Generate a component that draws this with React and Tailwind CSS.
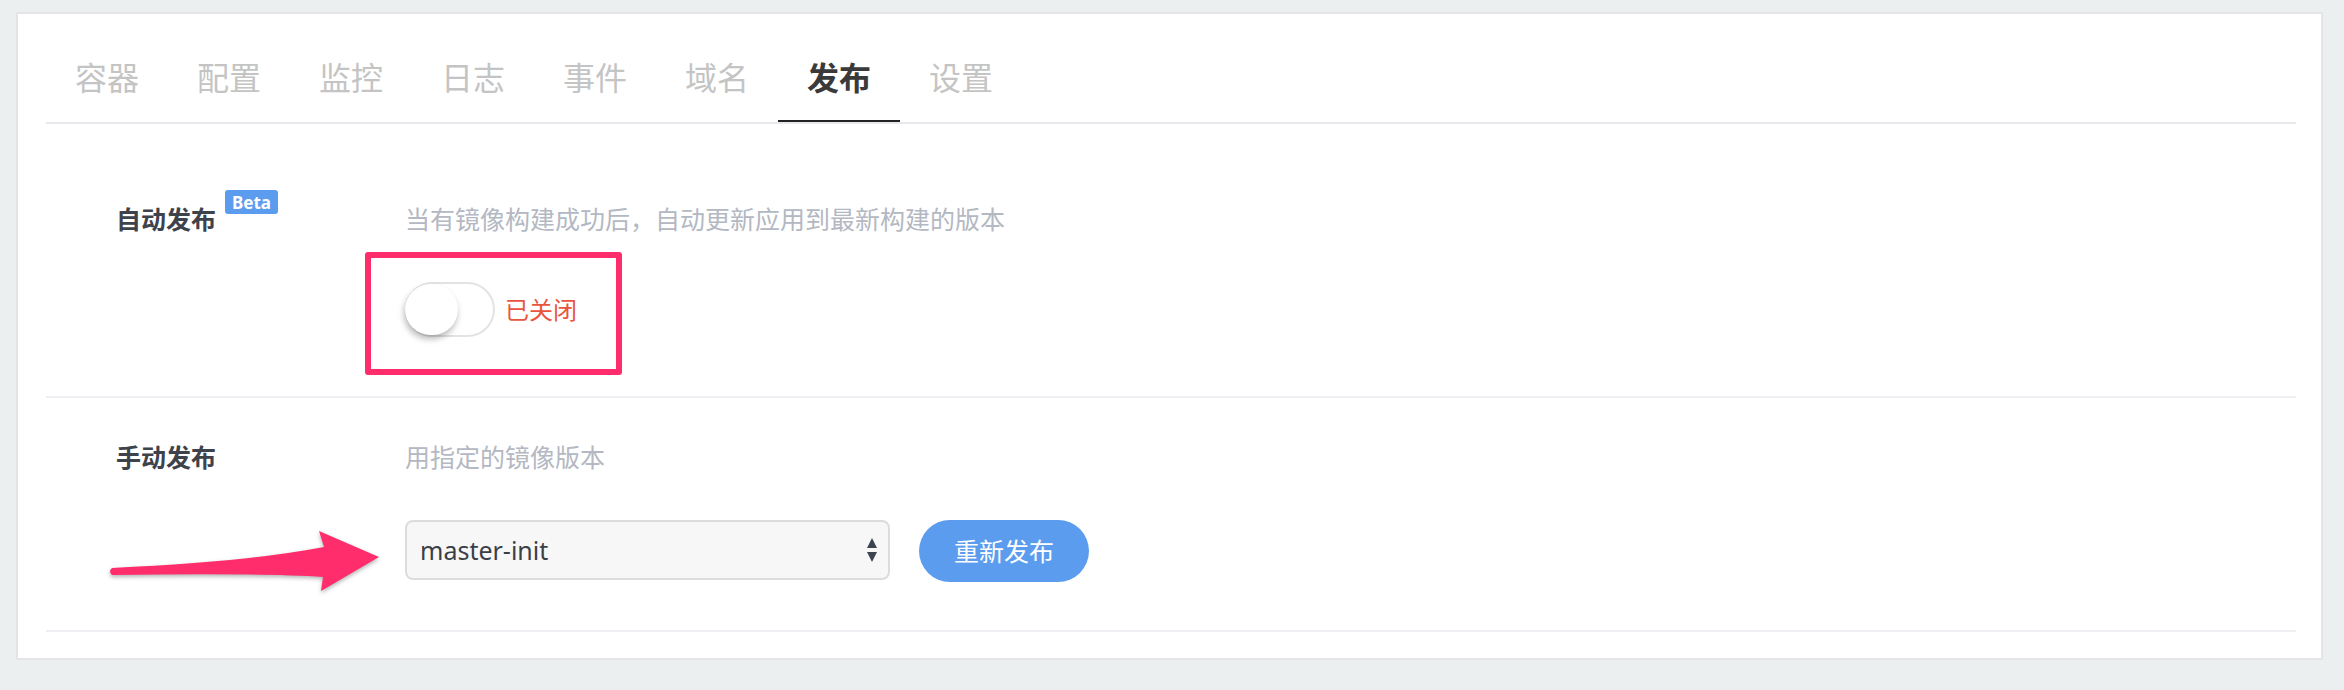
const tabs = ['容器', '配置', '监控', '日志', '事件', '域名', '发布', '设置']

const font = { fontFamily: '"Noto Sans", "Noto Sans CJK SC", sans-serif' }

function Tabs({ active }) {
  return (
    <nav className="flex border-b-2 border-[#e8e9ed]">
      {tabs.map((tab) => (
        <div
          key={tab}
          className={
            tab === active
              ? 'border-b-2 border-[#222222] px-[29px] pb-[22px] pt-[44px] text-[32px] font-bold leading-[40px] text-[#3a3a3a]'
              : 'border-b-2 border-transparent px-[29px] pb-[22px] pt-[44px] text-[32px] leading-[40px] text-[#c4c4c4]'
          }
        >
          {tab}
        </div>
      ))}
    </nav>
  )
}

function Toggle() {
  return (
    <div className="relative h-[55px] w-[90px] rounded-full border-2 border-[#e3e3e3] bg-white">
      <span className="absolute -left-[2px] top-[0px] h-[51px] w-[53px] rounded-full bg-white shadow-[-1px_4px_6px_rgba(0,0,0,0.28)]" />
    </div>
  )
}

function PinkArrow() {
  return (
    <svg
      className="absolute -left-[299px] top-[5px] h-[75px] w-[280px] drop-shadow-[0_2px_2px_rgba(0,0,0,0.3)]"
      viewBox="0 0 280 75"
    >
      <path
        d="M6 43 Q140 37 218 22 L213 6 L273 32 L215 66 L217 52 Q160 48 6 50 Q2 46.5 6 43 Z"
        fill="#ff2d6b"
      />
    </svg>
  )
}

function SelectArrows() {
  return (
    <svg className="h-[24px] w-[10px]" viewBox="0 0 10 24">
      <path d="M0 10 L5 0 L10 10 Z" fill="#3d4450" />
      <path d="M0 14 L10 14 L5 24 Z" fill="#3d4450" />
    </svg>
  )
}

export default function App() {
  return (
    <div className="min-h-screen bg-[#ebefef] pl-[16px] pr-[21px] pt-[12px]" style={font}>
      <div className="border-2 border-[#e3e5e5] bg-white pb-[26px] pl-[28px] pr-[25px]">
        <Tabs active="发布" />

        <section className="grid grid-cols-[359px_1fr] border-b-2 border-[#eeeff3] pb-[59px] pt-[77px]">
          <div className="flex items-start pl-[70px]">
            <span className="text-[25px] font-bold leading-[36px] text-[#3d424b]">自动发布</span>
            <span className="-mt-[11px] ml-[9px] flex h-[24px] items-center rounded-[3px] bg-[#5b9cee] px-[7px] text-[17px] font-bold leading-none text-white">
              Beta
            </span>
          </div>
          <div className="flex flex-col">
            <p className="text-[25px] leading-[36px] text-[#b3b8c2]">
              当有镜像构建成功后，自动更新应用到最新构建的版本
            </p>
            <div className="relative mt-[45px] flex items-center gap-[10px] self-start pr-[40px]">
              <Toggle />
              <span className="text-[24px] leading-[32px] text-[#e8553e]">已关闭</span>
              <div className="absolute -left-[40px] -top-[30px] h-[123px] w-[257px] rounded-[3px] border-[6px] border-[#ff2d6b]" />
            </div>
          </div>
        </section>

        <section className="grid grid-cols-[359px_1fr] border-b-2 border-[#eeeff3] pb-[48px] pt-[41px]">
          <div className="pl-[70px]">
            <span className="text-[25px] font-bold leading-[36px] text-[#3d424b]">手动发布</span>
          </div>
          <div className="flex flex-col">
            <p className="text-[25px] leading-[36px] text-[#b3b8c2]">用指定的镜像版本</p>
            <div className="relative mt-[45px] flex items-start">
              <PinkArrow />
              <div className="flex h-[60px] w-[485px] items-center justify-between rounded-[8px] border-2 border-[#dcdcdc] bg-[#f7f7f7] pl-[13px] pr-[11px]">
                <span className="text-[25px] leading-[32px] text-[#3a3f48]">master-init</span>
                <SelectArrows />
              </div>
              <button className="ml-[29px] h-[62px] w-[170px] rounded-full bg-[#5b9cee] text-[25px] leading-[32px] text-white">
                重新发布
              </button>
            </div>
          </div>
        </section>
      </div>
    </div>
  )
}
